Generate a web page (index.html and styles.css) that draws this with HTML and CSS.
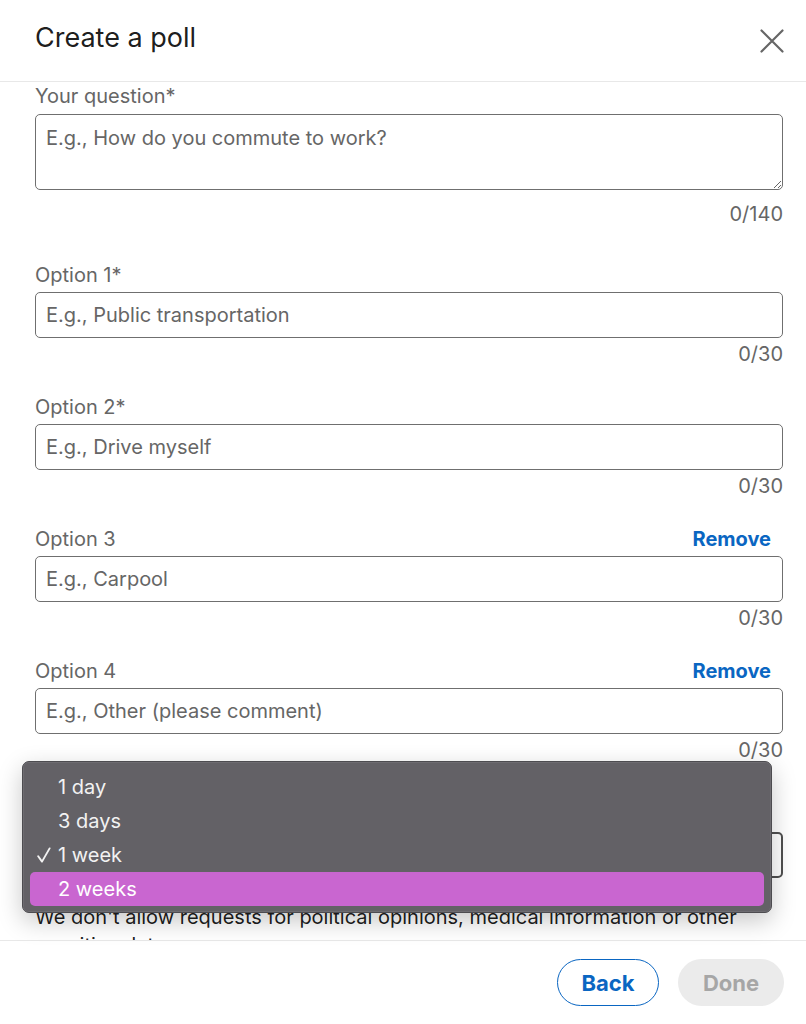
FILE: index.html
```html
<!DOCTYPE html>
<html lang="en">
<head>
  <meta charset="UTF-8" />
  <meta name="viewport" content="width=device-width, initial-scale=1.0"/>
  <title>Create a poll</title>
  <link rel="stylesheet" href="styles.css">
</head>
<body>

  <div class="modal">
    <div class="modal-header">
      <h2 class="modal-title">Create a poll</h2>
      <button class="close-btn" aria-label="Dismiss">
        <svg width="24" height="24" viewBox="0 0 24 24">
          <path d="M1.5 1.5 L22.5 22.5 M22.5 1.5 L1.5 22.5" stroke="#666" stroke-width="2.2" stroke-linecap="round" fill="none"/>
        </svg>
      </button>
    </div>

    <div class="modal-body">
      <div class="field field-question">
        <div class="field-label"><label>Your question*</label></div>
        <textarea class="text-area" placeholder="E.g., How do you commute to work?"></textarea>
        <div class="counter">0/140</div>
      </div>

      <div class="field">
        <div class="field-label"><label>Option 1*</label></div>
        <input class="text-input" type="text" placeholder="E.g., Public transportation">
        <div class="counter">0/30</div>
      </div>

      <div class="field">
        <div class="field-label"><label>Option 2*</label></div>
        <input class="text-input" type="text" placeholder="E.g., Drive myself">
        <div class="counter">0/30</div>
      </div>

      <div class="field">
        <div class="field-label">
          <label>Option 3</label>
          <button class="link-btn">Remove</button>
        </div>
        <input class="text-input" type="text" placeholder="E.g., Carpool">
        <div class="counter">0/30</div>
      </div>

      <div class="field">
        <div class="field-label">
          <label>Option 4</label>
          <button class="link-btn">Remove</button>
        </div>
        <input class="text-input" type="text" placeholder="E.g., Other (please comment)">
        <div class="counter">0/30</div>
      </div>

      <div class="field field-duration">
        <div class="field-label"><label>Poll duration</label></div>
        <div class="select-box">1 week</div>
      </div>

      <p class="notice">We don't allow requests for political opinions, medical information or other sensitive data.</p>
    </div>

    <div class="modal-footer">
      <button class="btn btn-secondary">Back</button>
      <button class="btn btn-disabled" disabled>Done</button>
    </div>

    <!-- open native select popup -->
    <ul class="dropdown-menu">
      <li class="dropdown-item">1 day</li>
      <li class="dropdown-item">3 days</li>
      <li class="dropdown-item">
        <svg class="check" width="14" height="16" viewBox="0 0 14 16">
          <path d="M1.2 9.2 L5 14.6 L12.6 1.4" stroke="#f2f2f2" stroke-width="1.9" stroke-linecap="round" stroke-linejoin="round" fill="none"/>
        </svg>1 week
      </li>
      <li class="dropdown-item active">2 weeks</li>
    </ul>
  </div>

</body>
</html>
```

FILE: styles.css
```css
:root {
  --text: rgba(0, 0, 0, 0.9);
  --muted: #666666;
  --border: #6f6f6f;
  --blue: #0a66c2;
  --menu-bg: #636166;
  --menu-hl: #c966d0;
}

body {
  margin: 0;
  font-family: 'Inter', 'Liberation Sans', sans-serif;
  background-color: white;
  color: var(--text);
}

.modal {
  position: relative;
  height: 100vh;
  display: flex;
  flex-direction: column;
  background: white;
  overflow: hidden;
}

.modal-header {
  height: 81px;
  display: flex;
  align-items: center;
  justify-content: space-between;
  padding: 0 22px 0 35px;
  border-bottom: 1px solid #e8e8e8;
  flex-shrink: 0;
}

.modal-title {
  margin: 0 0 6px;
  font-size: 27px;
  line-height: 32px;
  font-weight: 400;
  color: var(--text);
}

.close-btn {
  background: none;
  border: none;
  padding: 0;
  width: 24px;
  height: 24px;
  cursor: pointer;
}

.close-btn svg {
  display: block;
}

.modal-body {
  flex: 1;
  overflow: hidden;
  padding: 2px 23px 0 35px;
}

.field {
  margin-bottom: 29px;
}

.field-question {
  margin-bottom: 37px;
}

.field-label {
  display: flex;
  justify-content: space-between;
  align-items: center;
  height: 24px;
  margin-bottom: 5px;
}

.field-question .field-label {
  margin-bottom: 6px;
}

.field-label label {
  font-size: 20px;
  line-height: 24px;
  color: var(--muted);
}

.link-btn {
  background: none;
  border: none;
  padding: 0;
  margin-right: 12px;
  font-family: inherit;
  font-size: 20px;
  line-height: 24px;
  font-weight: 700;
  color: var(--blue);
  cursor: pointer;
}

.text-input,
.text-area {
  display: block;
  box-sizing: border-box;
  width: 100%;
  border: 1px solid var(--border);
  border-radius: 5px;
  font-family: inherit;
  font-size: 20px;
  color: var(--text);
  background: white;
  outline: none;
}

.text-input {
  height: 46px;
  padding: 0 10px;
}

.text-area {
  height: 76px;
  padding: 11px 10px;
  line-height: 24px;
  resize: vertical;
}

.text-input::placeholder,
.text-area::placeholder {
  color: var(--muted);
}

.counter {
  margin-top: 4px;
  text-align: right;
  font-size: 20px;
  line-height: 24px;
  color: var(--muted);
}

.field-question .counter {
  margin-top: 12px;
}

.field-duration {
  margin-top: 41px;
  margin-bottom: 25px;
}

.select-box {
  box-sizing: border-box;
  height: 46px;
  border: 2px solid #505050;
  border-radius: 5px;
  padding: 0 10px;
  font-size: 20px;
  line-height: 42px;
}

.notice {
  margin: 0;
  font-size: 20px;
  line-height: 28px;
  color: var(--text);
}

.modal-footer {
  flex-shrink: 0;
  display: flex;
  justify-content: flex-end;
  gap: 19px;
  padding: 18px 22px 18px 0;
  border-top: 1px solid #e8e8e8;
}

.btn {
  height: 47px;
  border-radius: 24px;
  font-family: inherit;
  font-size: 22px;
  font-weight: 700;
  cursor: pointer;
}

.btn-secondary {
  width: 102px;
  background: white;
  color: var(--blue);
  border: 1.5px solid var(--blue);
}

.btn-disabled {
  width: 106px;
  background: #ebebeb;
  color: #a6a6a6;
  border: none;
  cursor: default;
}

.dropdown-menu {
  position: absolute;
  left: 22px;
  top: 761px;
  width: 750px;
  box-sizing: border-box;
  margin: 0;
  padding: 8px 7px 6px;
  list-style: none;
  background: var(--menu-bg);
  border: 1px solid #4d4c50;
  border-radius: 7px;
  box-shadow: 0 0 0 0.5px rgba(255, 255, 255, 0.15) inset, 0 8px 24px rgba(0, 0, 0, 0.22);
}

.dropdown-item {
  position: relative;
  height: 34px;
  line-height: 34px;
  padding-left: 28px;
  border-radius: 5px;
  font-size: 20px;
  color: #f2f2f2;
}

.dropdown-item.active {
  background: var(--menu-hl);
  color: white;
}

.check {
  position: absolute;
  left: 7px;
  top: 9px;
}
```
